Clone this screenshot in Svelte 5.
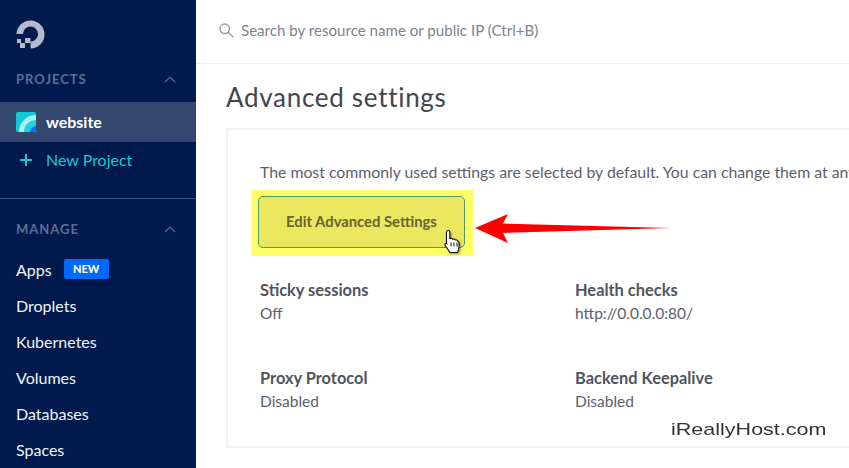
<script>
    const groups = [
        { label: 'Sticky sessions', value: 'Off' },
        { label: 'Health checks', value: 'http://0.0.0.0:80/' },
        { label: 'Proxy Protocol', value: 'Disabled' },
        { label: 'Backend Keepalive', value: 'Disabled' }
    ];
    const manage = ['Droplets', 'Kubernetes', 'Volumes', 'Databases', 'Spaces'];
</script>

<div class="page">
    <aside class="sidebar">
        <div class="logo">
            <svg width="32" height="32" viewBox="0 0 32 32" fill="#b3bac9">
                <path d="M15.500 29.500v-7a7.500 7.500 0 1 0-7.500-7.500H1.500a14 14 0 1 1 14 14.500z" />
                <rect x="10" y="19" width="5.500" height="5" />
                <rect x="5" y="24" width="5" height="5" />
                <rect x="2" y="20" width="4" height="4" />
            </svg>
        </div>
        <div class="section first">
            <span>PROJECTS</span>
            <svg class="chev" width="12" height="7" viewBox="0 0 12 7"><path d="M1 6l5-5 5 5" /></svg>
        </div>
        <div class="project">
            <svg width="20" height="20" viewBox="0 0 20 20">
                <clipPath id="tile"><rect width="20" height="20" rx="2" /></clipPath>
                <g clip-path="url(#tile)">
                    <rect width="20" height="20" fill="#12c9d6" />
                    <circle cx="20" cy="20" r="17" fill="#a6f2ee" />
                    <circle cx="20" cy="20" r="12" fill="#22d3dc" />
                    <circle cx="20" cy="20" r="6" fill="#0a6cf0" />
                </g>
            </svg>
            <span>website</span>
        </div>
        <div class="new-project">
            <svg width="12" height="12" viewBox="0 0 12 12"><path d="M6 0v12M0 6h12" stroke="#14c8d4" stroke-width="2" /></svg>
            <span>New Project</span>
        </div>
        <div class="divider"></div>
        <div class="section second">
            <span>MANAGE</span>
            <svg class="chev" width="12" height="7" viewBox="0 0 12 7"><path d="M1 6l5-5 5 5" /></svg>
        </div>
        <nav>
            <div class="item">Apps <span class="badge">NEW</span></div>
            {#each manage as name}
                <div class="item">{name}</div>
            {/each}
        </nav>
    </aside>

    <main>
        <header>
            <svg width="15" height="15" viewBox="0 0 15 15" fill="none" stroke="#9aa0a8" stroke-width="1.500">
                <circle cx="5.800" cy="5.800" r="4.700" />
                <path d="M9.300 9.300l5 5" />
            </svg>
            <span>Search by resource name or public IP (Ctrl+B)</span>
        </header>
        <div class="content">
            <h1>Advanced settings</h1>
            <section class="card">
                <p>The most commonly used settings are selected by default. You can change them at any time.</p>
                <div class="highlight">
                    <button>Edit Advanced Settings</button>
                    <svg class="cursor" width="20" height="26" viewBox="0 0 20 26">
                        <path d="M5 1.500c1 0 1.800.8 1.800 2v6l1-.2c1 0 1.500.3 1.800 1 1-.5 2-.3 2.500.6 1-.4 2-.1 2.500 1 .8.300 1.400 1 1.400 2.100v4c0 2-.7 3.500-1.500 5.500H7c-1.500-2.500-3.500-5-5-7.500-.6-1 .4-2.300 1.800-1.400L3.500 13.500V3.500c0-1.200.6-2 1.500-2z" fill="#fff" stroke="#111" stroke-width="1.100" />
                        <path d="M8 13.500v4M11 13.500v4M14 13.500v4" stroke="#111" stroke-width="1" fill="none" />
                    </svg>
                </div>
                <div class="details">
                    {#each groups as g}
                        <div class="detail">
                            <strong>{g.label}</strong>
                            <span>{g.value}</span>
                        </div>
                    {/each}
                </div>
            </section>
        </div>
        <svg class="arrow" width="196" height="30" viewBox="0 0 196 30">
            <path d="M0 15L33 1 28 10.500 196 15 28 20 33 30z" fill="#ff0000" />
        </svg>
        <div class="watermark">iReallyHost.com</div>
    </main>
</div>

<style>
    :global(body) {
        margin: 0;
        background: #fff;
        overflow: hidden;
    }

    .page {
        display: flex;
        width: 849px;
        height: 468px;
        overflow: hidden;
        font-family: "Lato", "Liberation Sans", sans-serif;
    }

    .sidebar {
        width: 196px;
        flex: none;
        background: #001a4d;
        color: #fff;
    }

    .logo {
        height: 32px;
        padding: 19px 0 0 15px;
    }

    .section {
        display: flex;
        justify-content: space-between;
        align-items: center;
        padding: 0 20px 0 16px;
        height: 18px;
        color: #5d6f93;
        font-size: 13px;
        font-weight: 700;
        letter-spacing: 1px;
    }

    .section.first {
        margin-top: 19px;
    }

    .section.second {
        margin-top: 21px;
    }

    .chev {
        fill: none;
        stroke: #5d6f93;
        stroke-width: 1.200;
    }

    .project {
        display: flex;
        align-items: center;
        gap: 10px;
        margin-top: 14px;
        height: 40px;
        padding-left: 16px;
        background: #33476f;
        font-size: 16px;
        font-weight: 700;
    }

    .project span {
        padding-bottom: 2px;
    }

    .new-project {
        display: flex;
        align-items: center;
        height: 36px;
        padding-left: 20px;
        gap: 14px;
        color: #14c8d4;
        font-size: 16px;
    }

    .new-project span {
        padding-bottom: 2px;
    }

    .divider {
        height: 1px;
        margin-top: 20px;
        background: #3d5078;
    }

    nav {
        margin-top: 13px;
    }

    .item {
        display: flex;
        align-items: center;
        gap: 12px;
        height: 36px;
        padding-left: 16px;
        font-size: 16px;
        color: #f2f4f8;
    }

    .badge {
        display: block;
        width: 45px;
        height: 20px;
        line-height: 20px;
        text-align: center;
        border-radius: 2px;
        background: #0069ff;
        color: #fff;
        font-size: 11px;
        font-weight: 900;
    }

    main {
        position: relative;
        flex: 1;
        min-width: 0;
    }

    header {
        display: flex;
        align-items: center;
        gap: 7px;
        height: 60px;
        padding: 0 0 3px 23px;
        border-bottom: 1px solid #eff0f2;
        color: #7d838c;
        font-size: 15.100px;
    }

    .content {
        padding: 14px 0 0 30px;
    }

    h1 {
        margin: 0;
        height: 50px;
        font-size: 26px;
        line-height: 38px;
        font-weight: 400;
        letter-spacing: 0.700px;
        color: #3f4650;
    }

    .card {
        width: 700px;
        height: 316px;
        box-sizing: content-box;
        border: 2px solid #f1f2f4;
        padding: 0 0 0 32px;
    }

    p {
        margin: 0;
        padding-top: 31px;
        height: 22px;
        line-height: 22px;
        font-size: 15.800px;
        color: #5b616b;
        white-space: nowrap;
    }

    .highlight {
        position: relative;
        width: 207px;
        margin: 7px 0 0 -9px;
        padding: 6px 8px 8px 7px;
        background: #ffff66;
    }

    button {
        display: block;
        width: 207px;
        height: 52px;
        padding: 0 0 2px;
        border: 1px solid #4c9a68;
        border-radius: 5px;
        background: #ebe860;
        color: #666330;
        font: 700 14.800px "Lato", "Liberation Sans", sans-serif;
    }

    .cursor {
        position: absolute;
        left: 192px;
        top: 39px;
        filter: drop-shadow(1px 1px 1px rgba(0, 0, 0, 0.45));
    }

    .details {
        display: grid;
        grid-template-columns: 315px 315px;
        grid-auto-rows: 88px;
        margin-top: 24px;
    }

    .detail {
        display: flex;
        flex-direction: column;
        gap: 5px;
        font-size: 15.500px;
        line-height: 19px;
        color: #5b616b;
    }

    .detail strong {
        font-size: 16.400px;
        font-weight: 700;
        color: #4f555e;
    }

    .arrow {
        position: absolute;
        left: 279px;
        top: 213px;
    }

    .watermark {
        position: absolute;
        left: 475px;
        top: 420px;
        font: 17px "Liberation Sans", sans-serif;
        transform: scaleX(1.266);
        transform-origin: left center;
        color: #333;
    }
</style>
